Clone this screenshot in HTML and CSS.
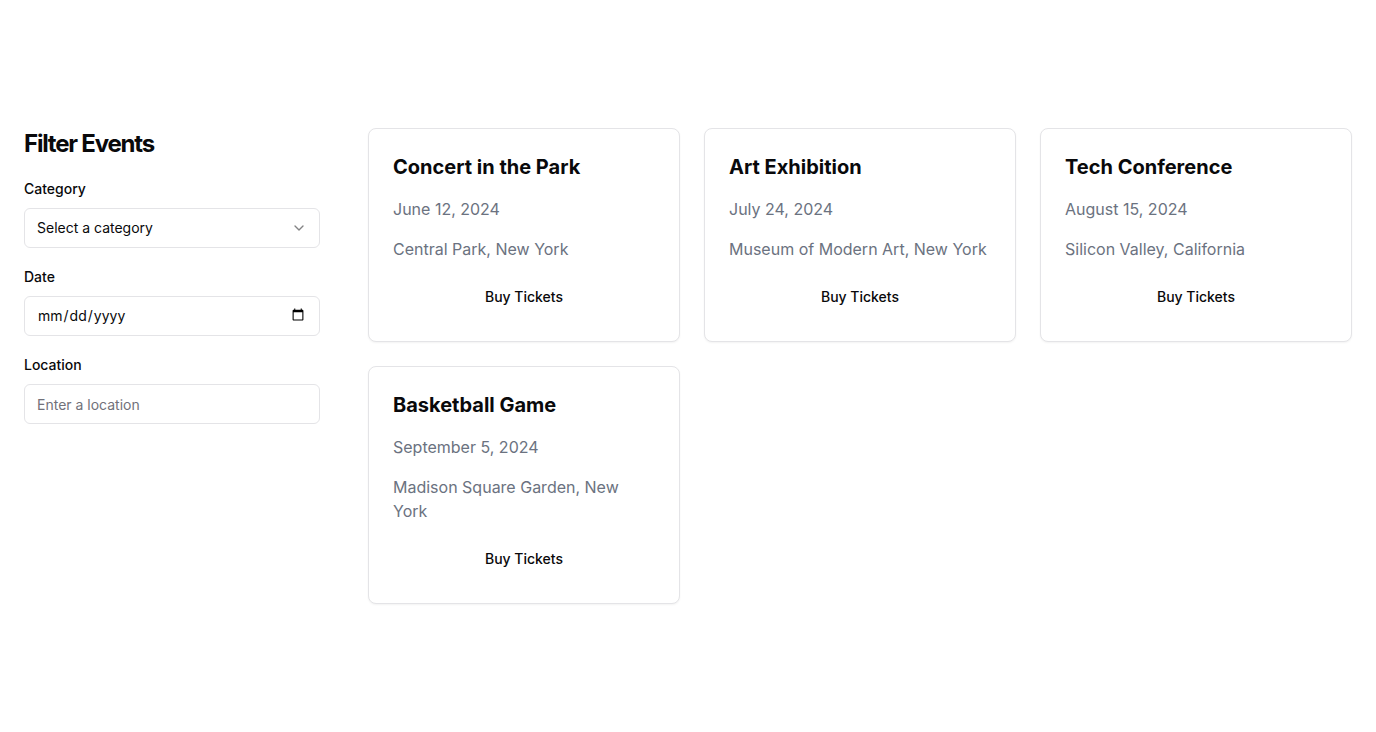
FILE: index.html
```html
<!DOCTYPE html>
<html lang="en">
<head>
<meta charset="utf-8">
<title>Events</title>
<link rel="stylesheet" href="styles.css">
</head>
<body>
<main class="page">
  <aside class="sidebar">
    <h2 class="sidebar-title">Filter Events</h2>
    <div class="field">
      <label class="label">Category</label>
      <button class="select" type="button">
        <span>Select a category</span>
        <svg class="chevron" width="16" height="16" viewBox="0 0 24 24" fill="none" stroke="currentColor" stroke-width="2" stroke-linecap="round" stroke-linejoin="round"><path d="m6 9 6 6 6-6"/></svg>
      </button>
    </div>
    <div class="field">
      <label class="label" for="date">Date</label>
      <input class="input input-date" id="date" type="date">
    </div>
    <div class="field">
      <label class="label" for="loc">Location</label>
      <input class="input" id="loc" type="text" placeholder="Enter a location">
    </div>
  </aside>
  <section class="grid">
    <article class="card">
      <h3 class="card-title">Concert in the Park</h3>
      <p class="card-meta">June 12, 2024</p>
      <p class="card-meta">Central Park, New York</p>
      <button class="btn" type="button">Buy Tickets</button>
    </article>
    <article class="card">
      <h3 class="card-title">Art Exhibition</h3>
      <p class="card-meta">July 24, 2024</p>
      <p class="card-meta">Museum of Modern Art, New York</p>
      <button class="btn" type="button">Buy Tickets</button>
    </article>
    <article class="card">
      <h3 class="card-title">Tech Conference</h3>
      <p class="card-meta">August 15, 2024</p>
      <p class="card-meta">Silicon Valley, California</p>
      <button class="btn" type="button">Buy Tickets</button>
    </article>
    <article class="card">
      <h3 class="card-title">Basketball Game</h3>
      <p class="card-meta">September 5, 2024</p>
      <p class="card-meta">Madison Square Garden, New York</p>
      <button class="btn" type="button">Buy Tickets</button>
    </article>
  </section>
</main>
</body>
</html>
```
FILE: styles.css
```css
* { box-sizing: border-box; }
html, body { margin: 0; padding: 0; background: #fff; }
body {
  font-family: Inter, "Liberation Sans", sans-serif;
  color: #09090b;
}
.page {
  display: flex;
  align-items: flex-start;
  gap: 48px;
  padding: 128px 24px 24px;
}
.sidebar {
  width: 296px;
  flex-shrink: 0;
  display: flex;
  flex-direction: column;
  gap: 19px;
}
.sidebar-title {
  margin: 0;
  font-size: 24px;
  line-height: 32px;
  font-weight: 700;
  letter-spacing: -0.05em;
}
.field {
  display: flex;
  flex-direction: column;
  gap: 9px;
}
.label {
  font-size: 14px;
  line-height: 20px;
  font-weight: 500;
}
.select, .input {
  height: 40px;
  width: 100%;
  border: 1px solid #e4e4e7;
  border-radius: 6px;
  background: #fff;
  padding: 0 12px;
  font-family: inherit;
  font-size: 14px;
  color: #09090b;
}
.select {
  display: flex;
  align-items: center;
  justify-content: space-between;
  text-align: left;
  padding-bottom: 2px;
}
.input-date { padding-bottom: 2px; }
.chevron { opacity: 0.5; color: #09090b; margin-top: 2px; }
.input::placeholder { color: #71717a; }
.input:focus { outline: none; }
.grid {
  flex: 1;
  display: grid;
  grid-template-columns: repeat(3, 1fr);
  gap: 24px;
  align-items: start;
}
.card {
  border: 1px solid #e4e4e7;
  border-radius: 8px;
  background: #fff;
  box-shadow: 0 1px 2px rgba(0,0,0,0.05);
  padding: 24px;
  display: flex;
  flex-direction: column;
  gap: 16px;
}
.card-title {
  margin: 0;
  font-size: 20px;
  line-height: 28px;
  font-weight: 700;
}
.card-meta {
  margin: 0;
  font-size: 16px;
  line-height: 24px;
  color: #6b7280;
}
.btn {
  height: 40px;
  width: 100%;
  border: none;
  background: transparent;
  border-radius: 6px;
  padding: 0 0 2px;
  font-family: inherit;
  font-size: 14px;
  font-weight: 500;
  color: #09090b;
  cursor: pointer;
}
```
